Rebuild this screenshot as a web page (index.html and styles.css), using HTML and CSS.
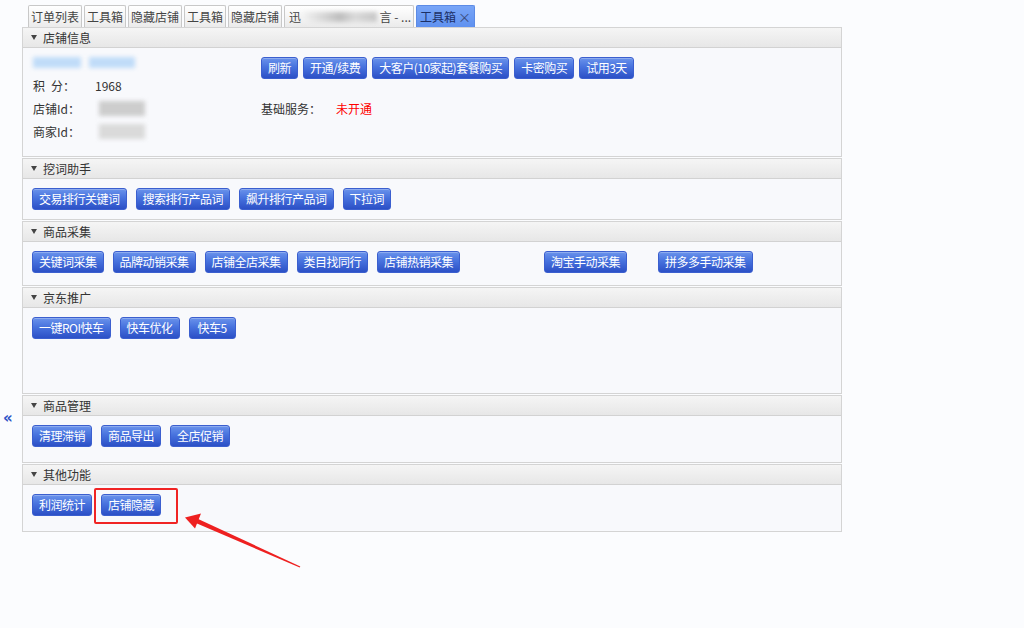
FILE: index.html
```html
<!DOCTYPE html>
<html lang="zh-CN">
<head>
    <meta charset="UTF-8">
    <title>工具箱</title>
    <link rel="stylesheet" href="styles.css">
</head>
<body>
    <!-- Tab strip -->
    <div class="tabs">
        <div class="tab">订单列表</div>
        <div class="tab">工具箱</div>
        <div class="tab">隐藏店铺</div>
        <div class="tab">工具箱</div>
        <div class="tab">隐藏店铺</div>
        <div class="tab tab-wide">迅<span class="blur blur-tab"></span>言 - ...</div>
        <div class="tab tab-active">工具箱<span class="tab-close">×</span></div>
    </div>

    <div class="panel">
        <!-- 店铺信息 -->
        <div class="section">
            <div class="section-head"><i class="caret"></i>店铺信息</div>
            <div class="section-body body-info">
                <div class="info-left">
                    <div class="info-row">
                        <span class="blur blur-blue"></span>
                        <span class="blur blur-blue blur-short"></span>
                    </div>
                    <div class="info-row">
                        <span class="info-label">积&ensp;分：</span><span>1968</span>
                    </div>
                    <div class="info-row">
                        <span class="info-label">店铺Id：</span><span class="blur blur-gray"></span>
                    </div>
                    <div class="info-row">
                        <span class="info-label">商家Id：</span><span class="blur blur-gray blur-light"></span>
                    </div>
                </div>
                <div class="info-right">
                    <div class="btn-row btn-row-tight">
                        <button class="btn">刷新</button>
                        <button class="btn">开通/续费</button>
                        <button class="btn">大客户(10家起)套餐购买</button>
                        <button class="btn">卡密购买</button>
                        <button class="btn">试用3天</button>
                    </div>
                    <div class="info-row service-row">
                        <span class="info-label label-wide">基础服务：</span><span class="text-red">未开通</span>
                    </div>
                </div>
            </div>
        </div>

        <!-- 挖词助手 -->
        <div class="section">
            <div class="section-head"><i class="caret"></i>挖词助手</div>
            <div class="section-body body-words">
                <div class="btn-row">
                    <button class="btn">交易排行关键词</button>
                    <button class="btn">搜索排行产品词</button>
                    <button class="btn">飙升排行产品词</button>
                    <button class="btn">下拉词</button>
                </div>
            </div>
        </div>

        <!-- 商品采集 -->
        <div class="section">
            <div class="section-head"><i class="caret"></i>商品采集</div>
            <div class="section-body body-collect">
                <div class="btn-row">
                    <button class="btn">关键词采集</button>
                    <button class="btn">品牌动销采集</button>
                    <button class="btn">店铺全店采集</button>
                    <button class="btn">类目找同行</button>
                    <button class="btn">店铺热销采集</button>
                    <button class="btn btn-taobao">淘宝手动采集</button>
                    <button class="btn btn-pdd">拼多多手动采集</button>
                </div>
            </div>
        </div>

        <!-- 京东推广 -->
        <div class="section">
            <div class="section-head"><i class="caret"></i>京东推广</div>
            <div class="section-body body-jd">
                <div class="btn-row">
                    <button class="btn">一键ROI快车</button>
                    <button class="btn">快车优化</button>
                    <button class="btn btn-k5">快车5</button>
                </div>
            </div>
        </div>

        <!-- 商品管理 -->
        <div class="section">
            <div class="section-head"><i class="caret"></i>商品管理</div>
            <div class="section-body body-manage">
                <div class="btn-row">
                    <button class="btn">清理滞销</button>
                    <button class="btn">商品导出</button>
                    <button class="btn">全店促销</button>
                </div>
            </div>
        </div>

        <!-- 其他功能 -->
        <div class="section">
            <div class="section-head"><i class="caret"></i>其他功能</div>
            <div class="section-body body-other">
                <div class="btn-row">
                    <button class="btn">利润统计</button>
                    <button class="btn">店铺隐藏</button>
                </div>
            </div>
        </div>
    </div>

    <!-- collapse handle -->
    <div class="collapse">«</div>

    <!-- annotation -->
    <div class="mark-box"></div>
    <svg class="mark-arrow" width="1024" height="628" viewBox="0 0 1024 628">
        <polygon points="185,517.5 201,513.5 195,528.5" fill="#ee2020"/>
        <polygon points="197.6,518.8 300.3,566.4 299.7,567.6 196.4,523.2" fill="#ee2020"/>
    </svg>
</body>
</html>
```

FILE: styles.css
```css
* {
    box-sizing: border-box;
    margin: 0;
    padding: 0;
}

body {
    font-family: "Noto Sans CJK SC", "Noto Sans", sans-serif;
    font-size: 12px;
    color: #333;
    background-color: #fbfcfe;
    width: 1024px;
    height: 628px;
    position: relative;
    overflow: hidden;
}

/* tabs */
.tabs {
    display: flex;
    gap: 2px;
    padding: 5px 0 0 28px;
    height: 27px;
}

.tab {
    height: 22px;
    line-height: 20px;
    padding: 0 2px;
    border: 1px solid #c8c8c8;
    border-bottom: none;
    border-radius: 2px 2px 0 0;
    background: linear-gradient(to bottom, #ffffff, #ebebeb);
    color: #444;
    white-space: nowrap;
    display: flex;
    align-items: center;
}

.tab-wide {
    width: 130px;
    padding-left: 4px;
}

.tab-active {
    background: linear-gradient(to bottom, #78a5f7, #5f91f0);
    border-color: #5c8be6;
    color: #1c2f66;
    padding: 0 3px;
}

.tab-close {
    margin-left: 2px;
    color: #3a4a77;
    font-size: 13px;
}

/* blurred placeholders */
.blur {
    display: inline-block;
    filter: blur(2px);
}

.blur-tab {
    width: 86px;
    height: 10px;
    margin: 0 3px 0 2px;
    background: linear-gradient(to right, #f2f2f2 0%, #d4d4d4 30%, #bdbdbd 50%, #dadada 70%, #c6c6c6 100%);
}

.blur-blue {
    width: 48px;
    height: 11px;
    background-color: #c0dcf8;
    margin-right: 8px;
}

.blur-short {
    width: 46px;
}

.blur-gray {
    width: 46px;
    height: 15px;
    margin-left: 4px;
    background-color: #cdcdcd;
}

.blur-light {
    background-color: #dadada;
}

/* panel */
.panel {
    margin-left: 22px;
    width: 820px;
}

.section {
    border: 1px solid #d4d4d4;
    margin-bottom: 1px;
    background-color: #f8f9fc;
}

.section-head {
    height: 20px;
    line-height: 19px;
    padding-left: 8px;
    border-bottom: 1px solid #d2d2d2;
    background: linear-gradient(to bottom, #f5f5f5, #e7e7e7);
    color: #333;
    display: flex;
    align-items: center;
}

.caret {
    width: 0;
    height: 0;
    border-left: 3.5px solid transparent;
    border-right: 3.5px solid transparent;
    border-top: 5px solid #444;
    margin-right: 6px;
}

.section-body {
    padding: 9px 9px 0;
}

.body-info { height: 108px; display: flex; padding: 3px 0 0 10px; }
.body-words { height: 40px; }
.body-collect { height: 43px; }
.body-jd { height: 85px; }
.body-manage { height: 46px; }
.body-other { height: 46px; }

/* shop info */
.info-left {
    width: 228px;
}

.info-row {
    height: 23px;
    display: flex;
    align-items: center;
}

.info-label {
    width: 62px;
}

.label-wide {
    width: 75px;
}

.info-right {
    padding-top: 6px;
}

.service-row {
    margin-top: 18px;
}

.text-red {
    color: #ff0000;
}

/* buttons */
.btn-row {
    display: flex;
    gap: 9px;
}

.btn-row-tight {
    gap: 5px;
}

.btn {
    height: 22px;
    padding: 0 6px;
    font-family: inherit;
    font-size: 12px;
    letter-spacing: -0.5px;
    line-height: 20px;
    color: #fff;
    border: 1px solid #3b5fcf;
    border-radius: 3px;
    background: linear-gradient(to bottom, #6a93eb 0%, #4772de 45%, #2c50c6 100%);
    box-shadow: inset 0 1px 0 rgba(255, 255, 255, 0.25);
    cursor: pointer;
}

.btn-taobao {
    margin-left: 75px;
}

.btn-pdd {
    margin-left: 22px;
}

.btn-k5 {
    padding: 0 8px;
}

/* overlays */
.collapse {
    position: absolute;
    left: 3px;
    top: 409px;
    color: #2d52c6;
    font-family: "DejaVu Sans", sans-serif;
    font-size: 15px;
    font-weight: bold;
}

.mark-box {
    position: absolute;
    left: 94px;
    top: 488px;
    width: 84px;
    height: 36px;
    border: 2px solid #f02424;
    border-radius: 2px;
}

.mark-arrow {
    position: absolute;
    left: 0;
    top: 0;
    pointer-events: none;
}
```
